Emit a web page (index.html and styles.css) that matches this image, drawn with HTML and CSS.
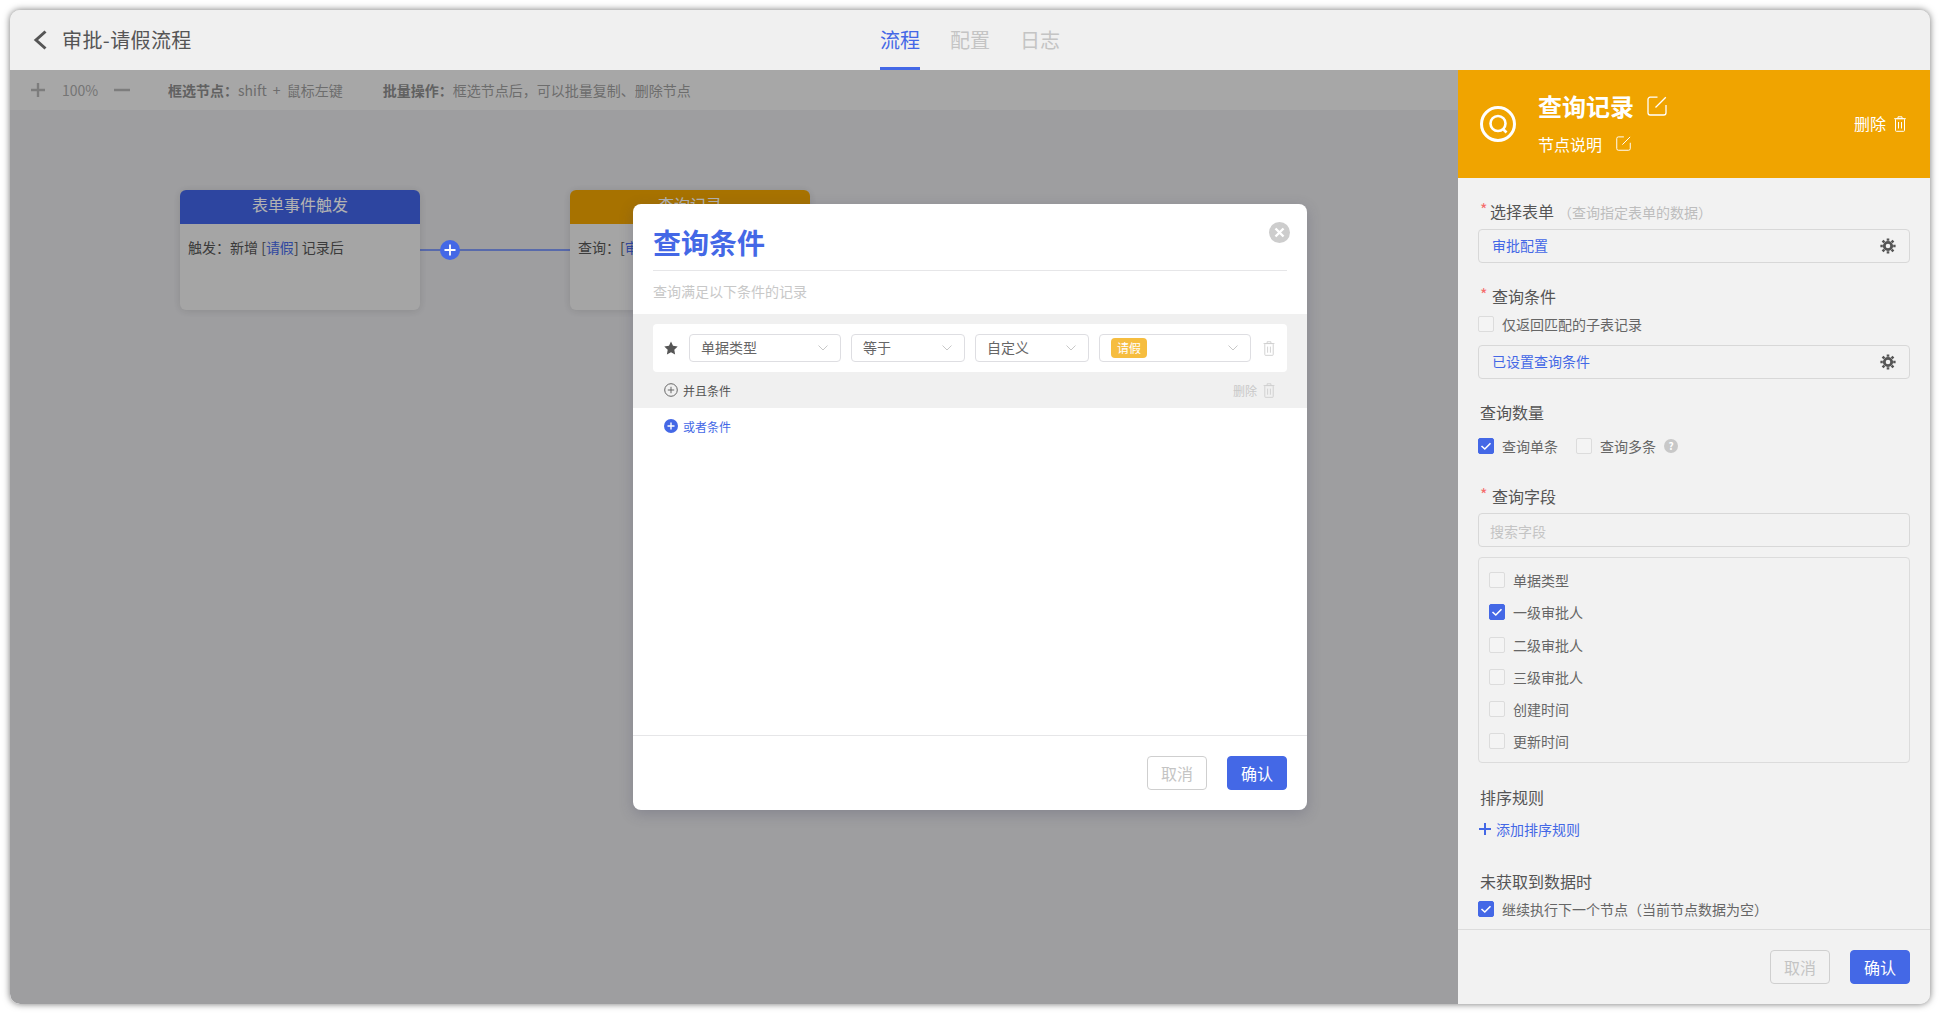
FILE: index.html
```html
<!DOCTYPE html>
<html lang="zh-CN">
<head>
<meta charset="utf-8">
<title>审批-请假流程</title>
<link rel="stylesheet" href="styles.css">
</head>
<body>
<svg class="sprite" aria-hidden="true">
  <symbol id="i-edit" viewBox="0 0 20 20"><path d="M10.500 1.200H3.200A2.200 2.200 0 0 0 1 3.400v13.400A2.200 2.200 0 0 0 3.200 19h13.600a2.200 2.200 0 0 0 2.200-2.200V9" fill="none" stroke="currentColor" stroke-width="1.300"/><path d="M8.500 11.500 18.800 1.200" fill="none" stroke="currentColor" stroke-width="1.300"/></symbol>
  <symbol id="i-trash" viewBox="0 0 12 16"><g fill="none" stroke="currentColor" stroke-width="1"><path d="M4 2.500V.8h4v1.700M.2 2.700h11.600"/><rect x="1.500" y="2.700" width="9" height="12.600" rx=".8"/><path d="M4.500 6v6.500M7.500 6v6.500"/></g></symbol>
  <symbol id="i-gear" viewBox="0 0 16 16"><g fill="none" stroke="currentColor"><circle cx="8" cy="8" r="3.700" stroke-width="2.800"/><path stroke-width="2.600" d="M8 .4v2.400M8 13.200v2.400M.4 8h2.400M13.200 8h2.400M2.600 2.600l1.700 1.700M11.700 11.700l1.700 1.700M2.600 13.400l1.700-1.700M11.700 4.300l1.700-1.700"/></g></symbol>
  <symbol id="i-chev" viewBox="0 0 10 6"><path d="M.5.5 5 5 9.500.5" fill="none" stroke="currentColor" stroke-width="1"/></symbol>
  <symbol id="i-check" viewBox="0 0 16 16"><path d="M3.500 8 6.800 11 12.500 5.300" fill="none" stroke="#fff" stroke-width="1.600"/></symbol>
</svg>

<div class="window">
  <header class="topbar">
    <div class="back">
      <svg class="back-icon" viewBox="0 0 14 20"><path d="M12.500 1.500 3 10l9.500 8.500" fill="none" stroke="currentColor" stroke-width="3"/></svg>
      <span class="back-title">审批-请假流程</span>
    </div>
    <nav class="tabs">
      <span class="tab active">流程</span>
      <span class="tab">配置</span>
      <span class="tab">日志</span>
    </nav>
  </header>

  <main class="main">
    <section class="canvas">
      <div class="toolbar">
        <svg class="zoom-btn" viewBox="0 0 14 14"><path d="M7 0v14M0 7h14" stroke="currentColor" stroke-width="2.400"/></svg>
        <span class="zoom-val">100%</span>
        <svg class="zoom-btn" viewBox="0 0 16 14"><path d="M0 7h16" stroke="currentColor" stroke-width="2.400"/></svg>
        <span class="tip tip-first"><b>框选节点：</b>shift + 鼠标左键</span>
        <span class="tip"><b>批量操作：</b>框选节点后，可以批量复制、删除节点</span>
      </div>
      <div class="stage">
        <div class="link-line"></div>
        <div class="add-node">
          <svg viewBox="0 0 20 20"><circle cx="10" cy="10" r="10" fill="currentColor"/><path d="M10 4.500v11M4.500 10h11" stroke="#fff" stroke-width="1.800"/></svg>
        </div>
        <article class="node node-a">
          <h3 class="node-head head-blue">表单事件触发</h3>
          <p class="node-body">触发：新增 [<span class="blue">请假</span>] 记录后</p>
        </article>
        <article class="node node-b">
          <h3 class="node-head head-orange">查询记录</h3>
          <p class="node-body">查询：[<span class="blue">审批配置</span>]</p>
        </article>
      </div>
    </section>

    <aside class="panel">
      <div class="panel-head">
        <svg class="panel-logo" viewBox="0 0 36 36"><circle cx="18" cy="18" r="16.500" fill="none" stroke="#fff" stroke-width="3"/><circle cx="18" cy="17.500" r="7.500" fill="none" stroke="#fff" stroke-width="2.600"/><path d="M23 23l3.500 3.500" stroke="#fff" stroke-width="2.600"/></svg>
        <div class="panel-info">
          <div class="panel-title"><span>查询记录</span><svg class="edit-lg"><use href="#i-edit"/></svg></div>
          <div class="panel-note"><span>节点说明</span><svg class="edit-sm"><use href="#i-edit"/></svg></div>
        </div>
        <div class="panel-del"><span>删除</span><svg class="trash-lg"><use href="#i-trash"/></svg></div>
      </div>

      <div class="panel-body">
        <div class="label mt-22"><span class="req req-tight">*</span>选择表单<span class="hint">（查询指定表单的数据）</span></div>
        <div class="input mt-5"><span class="blue">审批配置</span><svg class="gear"><use href="#i-gear"/></svg></div>

        <div class="label mt-22"><span class="req">*</span>查询条件</div>
        <label class="check mt-7"><span class="cb"></span>仅返回匹配的子表记录</label>
        <div class="input mt-13"><span class="blue">已设置查询条件</span><svg class="gear"><use href="#i-gear"/></svg></div>

        <div class="label mt-22">查询数量</div>
        <div class="check-row mt-13">
          <label class="check"><span class="cb on"><svg><use href="#i-check"/></svg></span>查询单条</label>
          <label class="check"><span class="cb"></span>查询多条</label>
          <span class="help">?</span>
        </div>

        <div class="label mt-31"><span class="req">*</span>查询字段</div>
        <div class="input mt-4 placeholder">搜索字段</div>
        <div class="field-list">
          <label class="check"><span class="cb"></span>单据类型</label>
          <label class="check"><span class="cb on"><svg><use href="#i-check"/></svg></span>一级审批人</label>
          <label class="check"><span class="cb"></span>二级审批人</label>
          <label class="check"><span class="cb"></span>三级审批人</label>
          <label class="check"><span class="cb"></span>创建时间</label>
          <label class="check"><span class="cb"></span>更新时间</label>
        </div>

        <div class="label mt-23">排序规则</div>
        <div class="add-rule">
          <svg viewBox="0 0 12 12"><path d="M6 0v12M0 6h12" stroke="currentColor" stroke-width="2"/></svg>
          <span>添加排序规则</span>
        </div>

        <div class="label mt-31">未获取到数据时</div>
        <label class="check mt-7"><span class="cb on"><svg><use href="#i-check"/></svg></span>继续执行下一个节点（当前节点数据为空）</label>
      </div>

      <div class="footer">
        <button class="btn btn-ghost">取消</button>
        <button class="btn btn-primary">确认</button>
      </div>
    </aside>
  </main>

  <div class="modal">
    <div class="modal-head">
      <h2 class="modal-title">查询条件</h2>
      <svg class="modal-close" viewBox="0 0 21 21"><circle cx="10.500" cy="10.500" r="10.500" fill="currentColor"/><path d="M6.500 6.500l8 8M14.500 6.500l-8 8" stroke="#fff" stroke-width="2.400"/></svg>
    </div>
    <p class="modal-sub">查询满足以下条件的记录</p>
    <div class="cond-group">
      <div class="cond-row">
        <svg class="star" viewBox="0 0 14 14"><path d="M7 .5l2 4.300 4.700.6-3.400 3.300.8 4.700L7 11.200l-4.100 2.200.8-4.700L.3 5.400 5 4.800z" fill="currentColor"/></svg>
        <div class="select w-lg"><span>单据类型</span><svg class="chev"><use href="#i-chev"/></svg></div>
        <div class="select w-sm"><span>等于</span><svg class="chev"><use href="#i-chev"/></svg></div>
        <div class="select w-sm"><span>自定义</span><svg class="chev"><use href="#i-chev"/></svg></div>
        <div class="select w-lg"><span class="tag">请假</span><svg class="chev"><use href="#i-chev"/></svg></div>
        <svg class="trash"><use href="#i-trash"/></svg>
      </div>
      <div class="cond-actions">
        <span class="cond-link">
          <svg class="plus-ring" viewBox="0 0 14 14"><circle cx="7" cy="7" r="6.300" fill="none" stroke="currentColor"/><path d="M7 3.800v6.400M3.800 7h6.400" stroke="currentColor"/></svg>
          并且条件
        </span>
        <span class="cond-del">删除<svg class="trash"><use href="#i-trash"/></svg></span>
      </div>
    </div>
    <div class="or-row">
      <svg class="plus-solid" viewBox="0 0 14 14"><circle cx="7" cy="7" r="7" fill="currentColor"/><path d="M7 3.500v7M3.500 7h7" stroke="#fff" stroke-width="1.400"/></svg>
      <span>或者条件</span>
    </div>
    <div class="modal-spacer"></div>
    <div class="footer modal-footer">
      <button class="btn btn-ghost">取消</button>
      <button class="btn btn-primary">确认</button>
    </div>
  </div>
</div>
</body>
</html>
```

FILE: styles.css
```css
* { box-sizing: border-box; }
html, body { margin: 0; height: 100%; background: #fff; overflow: hidden; }
body {
  padding: 10px;
  font-family: "Noto Sans CJK SC", "Noto Sans", sans-serif;
  font-size: 14px;
  color: #555;
}
h2, h3, p { margin: 0; font-weight: normal; }
.sprite { display: none; }
.blue { color: #4468e6; }

.window {
  position: relative;
  height: 994px;
  display: flex;
  flex-direction: column;
  background: #f0f0f0;
  border-radius: 10px;
  box-shadow: 0 0 7px rgba(0, 0, 0, .55);
}

/* top bar */
.topbar {
  position: relative;
  height: 60px;
  flex: none;
  display: flex;
  align-items: center;
  justify-content: center;
  background: #f0f0f0;
  border-radius: 10px 10px 0 0;
}
.back {
  position: absolute;
  left: 23px;
  top: 0;
  height: 60px;
  display: flex;
  align-items: center;
  gap: 15px;
  color: #555;
}
.back-icon { width: 14px; height: 20px; }
.back-title { font-size: 20px; letter-spacing: .4px; margin-top: -2px; }
.tabs { display: flex; gap: 30px; height: 60px; }
.tab {
  font-size: 20px;
  line-height: 59px;
  color: #c4c4c4;
  border-bottom: 3px solid transparent;
}
.tab.active { color: #4468e6; border-bottom-color: #4468e6; }

/* canvas */
.main { flex: 1; display: flex; min-height: 0; }
.canvas {
  flex: 1;
  min-width: 0;
  display: flex;
  flex-direction: column;
  position: relative;
  background: #e3e3e6;
  border-radius: 0 0 0 10px;
  overflow: hidden;
}
.toolbar {
  height: 40px;
  flex: none;
  display: flex;
  align-items: center;
  padding-left: 21px;
  background: #f0f0f0;
}
.zoom-btn { width: 14px; height: 14px; color: #b4b4b4; }
.zoom-btn:nth-of-type(2) { width: 16px; }
.zoom-val { width: 52px; margin-left: 17px; font-size: 14px; color: #a8a8a8; }
.tip { font-size: 14px; color: #9c9c9c; white-space: nowrap; margin-left: 40px; }
.tip-first { margin-left: 38px; word-spacing: 3px; }
.tip b { font-weight: 700; color: #8c8c8c; }
.stage { flex: 1; position: relative; }
.node {
  position: absolute;
  top: 80px;
  width: 240px;
  height: 120px;
  background: #ececec;
  border-radius: 6px;
  box-shadow: 0 1px 8px rgba(0, 0, 0, .12);
  overflow: hidden;
}
.node-a { left: 170px; }
.node-b { left: 560px; }
.node-head {
  height: 34px;
  font-size: 16px;
  line-height: 28px;
  text-align: center;
  color: #fff;
}
.head-blue { background: #4163e5; }
.head-orange { background: #f0a400; }
.node-body { padding: 0 8px; line-height: 46px; white-space: nowrap; color: #555; }
.link-line {
  position: absolute;
  left: 410px;
  top: 139px;
  width: 150px;
  height: 2px;
  background: #7f98f5;
}
.add-node {
  position: absolute;
  left: 430px;
  top: 130px;
  width: 20px;
  height: 20px;
  color: #4468e6;
  z-index: 1;
}
.add-node svg { display: block; width: 20px; height: 20px; }
.canvas::after {
  content: "";
  position: absolute;
  inset: 0;
  background: rgba(0, 0, 0, .3);
  border-radius: 0 0 0 10px;
}

/* side panel */
.panel {
  width: 472px;
  flex: none;
  display: flex;
  flex-direction: column;
  background: #f2f2f2;
  border-radius: 0 0 10px 0;
  position: relative;
}
.panel-head {
  height: 108px;
  flex: none;
  display: flex;
  align-items: center;
  padding: 0 24px 0 22px;
  background: #f0a400;
  color: #fff;
}
.panel-logo { width: 36px; height: 36px; flex: none; }
.panel-info { margin: -3px 0 0 22px; flex: 1; display: flex; flex-direction: column; gap: 10px; }
.panel-title { display: flex; align-items: center; height: 32px; font-size: 24px; font-weight: 700; }
.panel-note { display: flex; align-items: center; height: 24px; font-size: 16px; }
.edit-lg { width: 20px; height: 20px; margin-left: 13px; }
.edit-sm { width: 15px; height: 15px; margin-left: 14px; }
.panel-del { display: flex; align-items: center; font-size: 16px; gap: 8px; }
.panel-del span { margin-top: -2px; }
.trash-lg { width: 12px; height: 16px; }

.panel-body { flex: 1; min-height: 0; padding: 0 20px; overflow: hidden; display: flex; flex-direction: column; }
.label { height: 24px; flex: none; line-height: 23px; font-size: 16px; padding-left: 2px; color: #555; white-space: nowrap; }
.req { display: inline-block; width: 12px; color: #f56c6c; font-size: 16px; line-height: 16px; vertical-align: 2px; }
.req-tight { width: 10px; }
.hint { font-size: 14px; color: #bdbdbd; margin-left: 4px; }
.mt-4 { margin-top: 4px; }
.mt-5 { margin-top: 5px; }
.mt-7 { margin-top: 7px; }
.mt-13 { margin-top: 13px; }
.mt-22 { margin-top: 22px; }
.mt-23 { margin-top: 23px; }
.mt-31 { margin-top: 31px; }

.input {
  height: 34px;
  flex: none;
  display: flex;
  align-items: center;
  justify-content: space-between;
  padding: 0 13px 0 13px;
  border: 1px solid #d8d8d8;
  border-radius: 4px;
  font-size: 14px;
}
.input span { margin-top: -2px; }
.placeholder { color: #c4c4c4; padding: 2px 0 0 11px; font-size: 14px; }
.gear { width: 16px; height: 16px; color: #555; }

.check { display: flex; align-items: center; height: 16px; flex: none; font-size: 14px; color: #666; white-space: nowrap; }
.cb {
  width: 16px;
  height: 16px;
  flex: none;
  margin-right: 8px;
  border: 1px solid #dcdcdc;
  border-radius: 2px;
  background: #f4f4f4;
}
.cb.on { background: #4468e6; border-color: #4468e6; }
.cb svg { display: block; width: 16px; height: 16px; margin: -1px; }
.check-row { display: flex; align-items: center; height: 16px; flex: none; }
.check-row .check:nth-child(2) { margin-left: 18px; }
.help {
  width: 14px;
  height: 14px;
  margin-left: 8px;
  border-radius: 50%;
  background: #c8c8c8;
  color: #fff;
  font-size: 10px;
  font-weight: 700;
  line-height: 14px;
  text-align: center;
}
.field-list {
  height: 206px;
  flex: none;
  margin-top: 10px;
  padding: 14px 0 0 10px;
  border: 1px solid #dcdcdc;
  border-radius: 4px;
  display: flex;
  flex-direction: column;
  gap: 16.3px;
}
.add-rule { height: 20px; flex: none; margin-top: 9px; display: flex; align-items: center; gap: 5px; padding-left: 1px; color: #4468e6; font-size: 14px; }
.add-rule svg { width: 12px; height: 12px; }

.footer {
  height: 75px;
  flex: none;
  display: flex;
  justify-content: flex-end;
  align-items: center;
  gap: 20px;
  padding: 0 20px;
  border-top: 1px solid #dcdcdc;
}
.btn {
  width: 60px;
  height: 34px;
  padding: 0;
  font: inherit;
  font-size: 16px;
  border-radius: 4px;
}
.btn-ghost { background: transparent; border: 1px solid #cfcfcf; color: #c4c4c4; }
.btn-primary { background: #4468e6; border: 1px solid #4468e6; color: #fff; }

/* modal */
.modal {
  position: absolute;
  left: 623px;
  top: 194px;
  width: 674px;
  height: 606px;
  display: flex;
  flex-direction: column;
  background: #fff;
  border-radius: 8px;
  box-shadow: 0 4px 14px rgba(60, 60, 90, .25);
  z-index: 5;
}
.modal-head {
  height: 67px;
  flex: none;
  margin: 0 20px;
  position: relative;
  display: flex;
  align-items: center;
  border-bottom: 1px solid #e6e6e8;
}
.modal-title { font-size: 28px; font-weight: 700; color: #4468e6; line-height: 40px; margin-top: 9px; }
.modal-close { position: absolute; right: -3px; top: 18px; width: 21px; height: 21px; color: #cdcdcd; }
.modal-sub { height: 43px; flex: none; padding: 0 20px; line-height: 41px; font-size: 14px; color: #c8c8c8; }
.cond-group { flex: none; height: 94px; background: #f0f0f0; padding: 10px 20px 0; }
.cond-row {
  height: 48px;
  display: flex;
  align-items: center;
  gap: 10px;
  padding-left: 11px;
  background: #fff;
  border-radius: 4px;
}
.star { width: 14px; height: 14px; margin-right: 1px; color: #555; }
.select {
  height: 28px;
  display: flex;
  align-items: center;
  justify-content: space-between;
  padding: 0 12px 0 11px;
  border: 1px solid #dedee2;
  border-radius: 4px;
  font-size: 14px;
  color: #666;
}
.select span { margin-top: -2px; }
.select .tag { margin-top: 0; }
.w-lg { width: 152px; }
.w-sm { width: 114px; }
.chev { width: 10px; height: 6px; color: #c8c8c8; }
.tag { width: 36px; height: 20px; text-align: center; line-height: 19px; font-size: 12px; color: #fff; background: #f6bd3f; border-radius: 4px; }
.trash { width: 12px; height: 15px; color: #d0d0d0; margin-left: 2px; }
.cond-actions { height: 36px; display: flex; align-items: center; justify-content: space-between; padding: 0 12px 0 11px; font-size: 12px; }
.cond-link { display: flex; align-items: center; gap: 5px; color: #555; }
.plus-ring { width: 14px; height: 14px; color: #666; }
.cond-del { display: flex; align-items: center; gap: 4px; color: #c8c8c8; }
.or-row { height: 36px; flex: none; display: flex; align-items: center; gap: 5px; padding-left: 31px; font-size: 12px; color: #4468e6; }
.plus-solid { width: 14px; height: 14px; }
.modal-spacer { flex: 1; }
.modal-footer { border-top-color: #e6e6e8; }
```
